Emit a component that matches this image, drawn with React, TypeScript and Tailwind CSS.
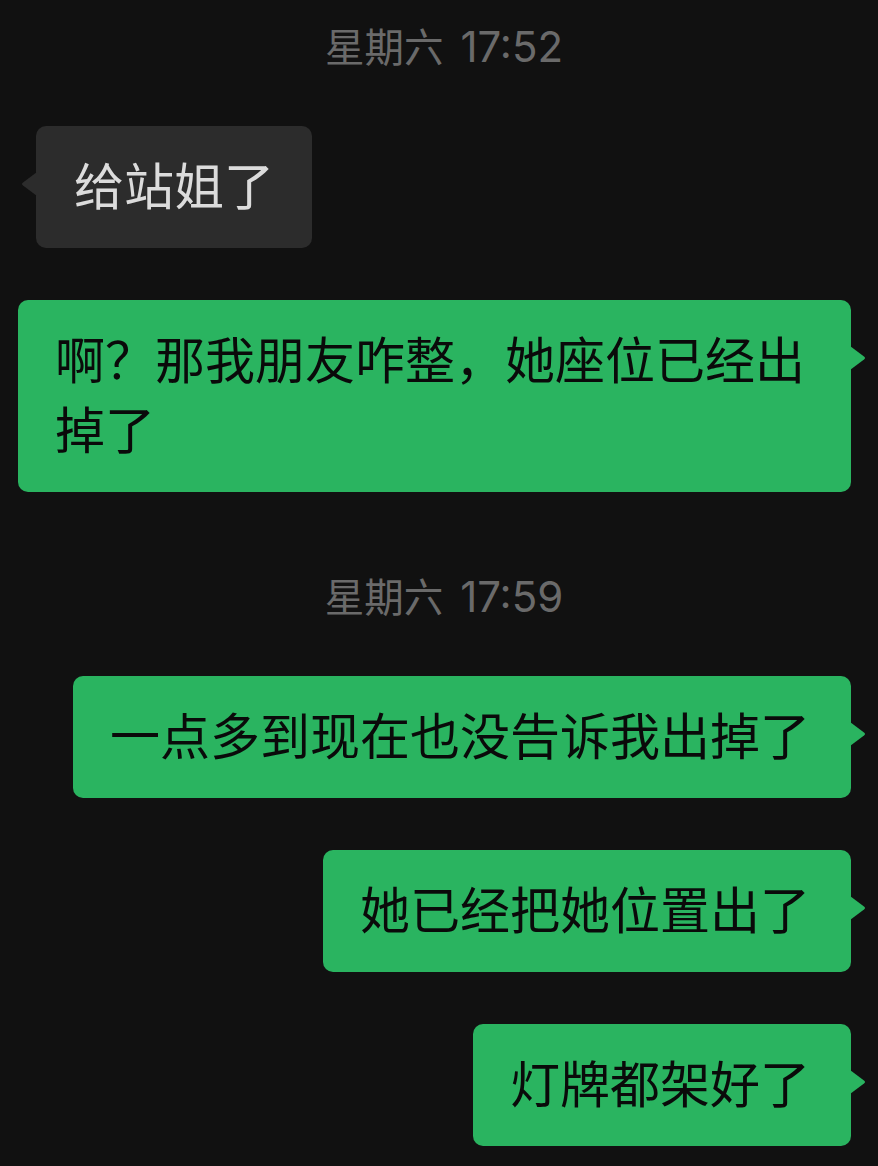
import React from "react";

const CJK = "font-['Inter','Noto_Sans_CJK_SC',sans-serif]";

function Time({ day, time }: { day: string; time: string }) {
  return (
    <div className="h-[46px] flex items-baseline justify-center pl-[10px] text-[#6a6a6a] leading-[44px]">
      <span className={`text-[39.5px] font-['Noto_Sans_CJK_SC',sans-serif]`}>{day}</span>
      <span className={`ml-[17px] text-[42px] font-['Inter',sans-serif]`}>{time}</span>
    </div>
  );
}

function LeftBubble({ text }: { text: string }) {
  return (
    <div className="flex justify-start pl-[36px]">
      <div className="relative">
        <svg className="absolute -left-[15px] top-[46px]" width="16" height="24" viewBox="0 0 16 24">
          <path d="M16 0 L2 10.5 Q0 12 2 13.5 L16 24 Z" fill="#2c2c2c" />
        </svg>
        <div className={`bg-[#2c2c2c] rounded-[10px] px-[38px] py-[26px] text-[50px] leading-[70px] text-[#dcdcdc] ${CJK}`}>
          {text}
        </div>
      </div>
    </div>
  );
}

function RightBubble({ text }: { text: string }) {
  return (
    <div className="flex justify-end pr-[27px]">
      <div className="relative max-w-[833px]">
        <svg className="absolute -right-[15px] top-[46px]" width="16" height="24" viewBox="0 0 16 24">
          <path d="M0 0 L14 10.5 Q16 12 14 13.5 L0 24 Z" fill="#2ab460" />
        </svg>
        <div className={`bg-[#2ab460] rounded-[10px] pl-[37px] pr-[41px] py-[26px] text-[50px] leading-[70px] text-[#0a0a0a] ${CJK}`}>
          {text}
        </div>
      </div>
    </div>
  );
}

export default function App() {
  return (
    <div className="w-[878px] h-[1166px] bg-[#111111] overflow-hidden pt-[23px] flex flex-col">
      <Time day="星期六" time="17:52" />
      <div className="h-[57px]" />
      <LeftBubble text="给站姐了" />
      <div className="h-[52px]" />
      <RightBubble text="啊？那我朋友咋整，她座位已经出掉了" />
      <div className="h-[81px]" />
      <Time day="星期六" time="17:59" />
      <div className="h-[57px]" />
      <RightBubble text="一点多到现在也没告诉我出掉了" />
      <div className="h-[52px]" />
      <RightBubble text="她已经把她位置出了" />
      <div className="h-[52px]" />
      <RightBubble text="灯牌都架好了" />
    </div>
  );
}
